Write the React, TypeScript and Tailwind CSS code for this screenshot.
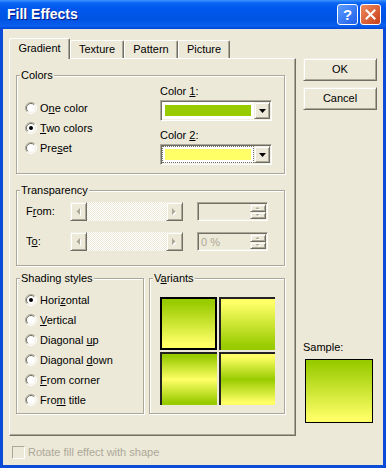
import React from "react";

const raised =
  "border border-t-[#F1EFE2] border-l-[#F1EFE2] border-r-[#716F64] border-b-[#716F64] bg-[#ECE9D8] shadow-[inset_1px_1px_0_#fff,inset_-1px_-1px_0_#ACA899]";
const sunken =
  "border border-t-[#ACA899] border-l-[#ACA899] border-r-white border-b-white shadow-[inset_1px_1px_0_#716F64,inset_-1px_-1px_0_#F1EFE2]";
const group =
  "border border-[#ACA899] shadow-[inset_1px_1px_0_#fff,1px_1px_0_#fff]";
const legend = "ml-[3px] px-[1px] bg-[#ECE9D8] leading-[13px]";

function U({ c }: { c: string }) {
  return <span className="underline decoration-1 underline-offset-[1px]">{c}</span>;
}

function RadioDot({ checked }: { checked?: boolean }) {
  return (
    <svg width="12" height="12" viewBox="0 0 12 12" className="shrink-0">
      <circle cx="6" cy="6" r="5" fill="#fff" />
      <path d="M2.1 9.9 A5.5 5.5 0 0 1 9.9 2.1" fill="none" stroke="#ACA899" strokeWidth="1" />
      <path d="M2.8 9.2 A4.5 4.5 0 0 1 9.2 2.8" fill="none" stroke="#716F64" strokeWidth="1" />
      <path d="M9.9 2.1 A5.5 5.5 0 0 1 2.1 9.9" fill="none" stroke="#fff" strokeWidth="1" />
      <path d="M9.2 2.8 A4.5 4.5 0 0 1 2.8 9.2" fill="none" stroke="#F1EFE2" strokeWidth="1" />
      {checked && <circle cx="6" cy="6" r="2" fill="#000" />}
    </svg>
  );
}

function RadioRow({ children, checked }: any) {
  return (
    <div className="flex h-[20px] items-center gap-[3px]">
      <RadioDot checked={checked} />
      <span className="leading-[13px]">{children}</span>
    </div>
  );
}

function DownArrow() {
  return (
    <svg width="7" height="4" viewBox="0 0 7 4">
      <path d="M0 0H7L3.5 4Z" fill="#000" />
    </svg>
  );
}

function ColorCombo({ color, focus }: { color: string; focus?: boolean }) {
  return (
    <div className={`${sunken} flex h-[21px] w-[112px] items-center bg-white pl-[1px] pr-[1px]`}>
      <div
        className={`h-[17px] w-[92px] p-[2px] ${
          focus ? "border border-dotted border-[#716F64]" : "border border-transparent"
        }`}
      >
        <div className="h-full w-full" style={{ background: color }} />
      </div>
      <div className={`${raised} ml-auto flex h-[17px] w-[16px] items-center justify-center`}>
        <DownArrow />
      </div>
    </div>
  );
}

function ScrollArrow({ dir }: { dir: "l" | "r" }) {
  const d = dir === "l" ? "M4 0V7L0.5 3.5Z" : "M0 0V7L3.5 3.5Z";
  return (
    <svg width="6" height="8" viewBox="0 0 6 8">
      <path d={d} transform="translate(1 1)" fill="#fff" />
      <path d={d} fill="#ACA899" />
    </svg>
  );
}

function SpinArrow({ up }: { up?: boolean }) {
  return (
    <svg width="6" height="4" viewBox="0 0 6 4">
      <path d={up ? "M0.5 3H4.5L2.5 1Z" : "M0.5 1H4.5L2.5 3Z"} transform="translate(1 1)" fill="#fff" />
      <path d={up ? "M0.5 3H4.5L2.5 1Z" : "M0.5 1H4.5L2.5 3Z"} fill="#ACA899" />
    </svg>
  );
}

function HScroll() {
  return (
    <div className="flex h-[19px] w-[113px]">
      <div className={`${raised} flex h-full w-[17px] items-center justify-center`}>
        <ScrollArrow dir="l" />
      </div>
      <div className="flex-1 bg-[repeating-conic-gradient(#ECE9D8_0_25%,#fff_0_50%)] bg-[length:2px_2px]" />
      <div className={`${raised} flex h-full w-[17px] items-center justify-center`}>
        <ScrollArrow dir="r" />
      </div>
    </div>
  );
}

function SpinEdit({ value }: { value?: string }) {
  return (
    <div className={`${sunken} flex h-[19px] w-[71px] bg-[#ECE9D8] p-[1px]`}>
      <div className="flex-1 pl-[2px] leading-[16px] text-[#ACA899]">{value}</div>
      <div className="flex w-[16px] flex-col">
        <div className={`${raised} flex h-1/2 items-center justify-center`}>
          <SpinArrow up />
        </div>
        <div className={`${raised} flex h-1/2 items-center justify-center`}>
          <SpinArrow />
        </div>
      </div>
    </div>
  );
}

function TransRow({ label, value }: any) {
  return (
    <div className="flex items-center">
      <div className="w-[44px] leading-[13px]">{label}</div>
      <HScroll />
      <div className="ml-[14px]">
        <SpinEdit value={value} />
      </div>
    </div>
  );
}

const G = "#99CC00";
const Y = "#FFFF66";

function Tab({ label, w, active }: any) {
  return (
    <div
      className={`relative flex items-center justify-center rounded-t-[2px] border-t border-l border-r border-t-white border-l-white border-r-[#716F64] bg-[#ECE9D8] shadow-[inset_-1px_0_0_#ACA899] ${
        active ? "z-10 mb-[-1px] h-[21px] pb-[1px]" : "h-[18px]"
      }`}
      style={{ width: w }}
    >
      {label}
    </div>
  );
}

export default function App() {
  return (
    <div className="flex h-[468px] w-[386px] flex-col bg-[#0A4BD8] font-['Liberation_Sans',Arial,sans-serif] text-[11px] text-black">
      {/* TITLE BAR */}
      <div className="flex h-[29px] shrink-0 items-center bg-[linear-gradient(180deg,#3D95FF_0px,#0A66F5_3px,#0058EE_8px,#0054E3_20px,#0A5FEF_26px,#0046D5_29px)] pl-[7px] pr-[5px]">
        <span className="text-[14px] font-bold text-white [text-shadow:1px_1px_0_#0A1883]">Fill Effects</span>
        <div className="ml-auto flex gap-[2px]">
          <div className="flex h-[21px] w-[21px] items-center justify-center rounded-[3px] border border-white bg-[linear-gradient(135deg,#5C9CFF,#1F5FEA)] text-[15px] font-bold leading-none text-white">
            ?
          </div>
          <div className="flex h-[21px] w-[21px] items-center justify-center rounded-[3px] border border-white bg-[linear-gradient(135deg,#EE8A5E,#C8401A)]">
            <svg width="11" height="11" viewBox="0 0 11 11">
              <path d="M1.5 1.5L9.5 9.5M9.5 1.5L1.5 9.5" stroke="#fff" strokeWidth="2" strokeLinecap="square" />
            </svg>
          </div>
        </div>
      </div>

      {/* BODY */}
      <div className="mx-[3px] mb-[3px] flex flex-1 bg-[#ECE9D8] pl-[6px] pt-[9px]">
        <div className="flex w-[287px] flex-col">
          {/* TABS */}
          <div className="flex h-[20px] items-end">
            <Tab label="Gradient" w={61} active />
            <Tab label="Texture" w={54} />
            <Tab label="Pattern" w={54} />
            <Tab label="Picture" w={52} />
          </div>

          {/* PANEL */}
          <div className="relative h-[378px] border border-t-white border-l-white border-r-[#716F64] border-b-[#716F64] shadow-[inset_-1px_-1px_0_#ACA899] pl-[6px]">
            {/* Colors */}
            <fieldset className={`${group} mt-[10px] w-[269px]`}>
              <legend className={legend}>Colors</legend>
              <div className="flex">
                <div className="w-[143px] pl-[8px] pt-[16px]">
                  <RadioRow>
                    O<U c="n" />e color
                  </RadioRow>
                  <RadioRow checked>
                    <U c="T" />wo colors
                  </RadioRow>
                  <RadioRow>
                    Pre<U c="s" />et
                  </RadioRow>
                </div>
                <div className="pb-[8px] pt-[3px]">
                  <div className="leading-[13px]">
                    Color <U c="1" />:
                  </div>
                  <div className="mt-[2px]">
                    <ColorCombo color={G} />
                  </div>
                  <div className="mt-[8px] leading-[13px]">
                    Color <U c="2" />:
                  </div>
                  <div className="mt-[2px]">
                    <ColorCombo color={Y} focus />
                  </div>
                </div>
              </div>
            </fieldset>

            {/* Transparency */}
            <fieldset className={`${group} mt-[10px] w-[269px]`}>
              <legend className={`${legend} ml-[2px]`}>Transparency</legend>
              <div className="pb-[14px] pl-[9px] pt-[5px]">
                <TransRow
                  label={
                    <>
                      F<U c="r" />om:
                    </>
                  }
                />
                <div className="mt-[11px]">
                  <TransRow
                    label={
                      <>
                        T<U c="o" />:
                      </>
                    }
                    value="0 %"
                  />
                </div>
              </div>
            </fieldset>

            {/* Shading + Variants */}
            <div className="mt-[6px] flex gap-[5px]">
              <fieldset className={`${group} w-[128px]`}>
                <legend className={legend}>Shading styles</legend>
                <div className="pb-[3px] pl-[8px] pt-[5px]">
                  <RadioRow checked>
                    Hori<U c="z" />ontal
                  </RadioRow>
                  <RadioRow>
                    <U c="V" />ertical
                  </RadioRow>
                  <RadioRow>
                    Diagonal <U c="u" />p
                  </RadioRow>
                  <RadioRow>
                    Diagonal <U c="d" />own
                  </RadioRow>
                  <RadioRow>
                    <U c="F" />rom corner
                  </RadioRow>
                  <RadioRow>
                    Fro<U c="m" /> title
                  </RadioRow>
                </div>
              </fieldset>

              <fieldset className={`${group} w-[136px]`}>
                <legend className={`${legend} ml-[2px]`}>
                  V<U c="a" />riants
                </legend>
                <div className="grid grid-cols-[57px_56px] grid-rows-[53px_53px] gap-[2px] pl-[10px] pt-[12px]">
                  <div
                    className="border-2 border-black"
                    style={{ background: `linear-gradient(180deg, ${G} 8%, ${Y} 92%)` }}
                  />
                  <div
                    className="border-l-2 border-t-2 border-l-[#222] border-t-[#222]"
                    style={{ background: `linear-gradient(180deg, ${Y} 8%, ${G} 92%)` }}
                  />
                  <div
                    className="border-l-2 border-t-2 border-l-[#222] border-t-[#222]"
                    style={{ background: `linear-gradient(180deg, ${G} 5%, ${Y} 50%, ${G} 95%)` }}
                  />
                  <div
                    className="border-l-2 border-t-2 border-l-[#222] border-t-[#222]"
                    style={{ background: `linear-gradient(180deg, ${Y} 5%, ${G} 50%, ${Y} 95%)` }}
                  />
                </div>
              </fieldset>
            </div>
          </div>

          {/* CHECKBOX */}
          <div className="ml-[3px] mt-[10px] flex items-center gap-[3px]">
            <div className="h-[13px] w-[13px] border border-t-[#ACA899] border-l-[#ACA899] border-r-white border-b-white" />
            <span className="leading-[13px] text-[#ACA899]">Rotate fill effect with shape</span>
          </div>
        </div>

        {/* RIGHT COLUMN */}
        <div className="ml-[7px] flex flex-col">
          <div className={`${raised} mt-[20px] flex h-[23px] w-[74px] items-center justify-center`}>OK</div>
          <div className={`${raised} mt-[6px] flex h-[23px] w-[74px] items-center justify-center`}>Cancel</div>
          <div className="mt-[231px] leading-[13px]">Sample:</div>
          <div
            className="ml-[2px] mt-[5px] h-[64px] w-[68px] border border-black"
            style={{ background: `linear-gradient(180deg, ${G} 5%, ${Y} 95%)` }}
          />
        </div>
      </div>
    </div>
  );
}
